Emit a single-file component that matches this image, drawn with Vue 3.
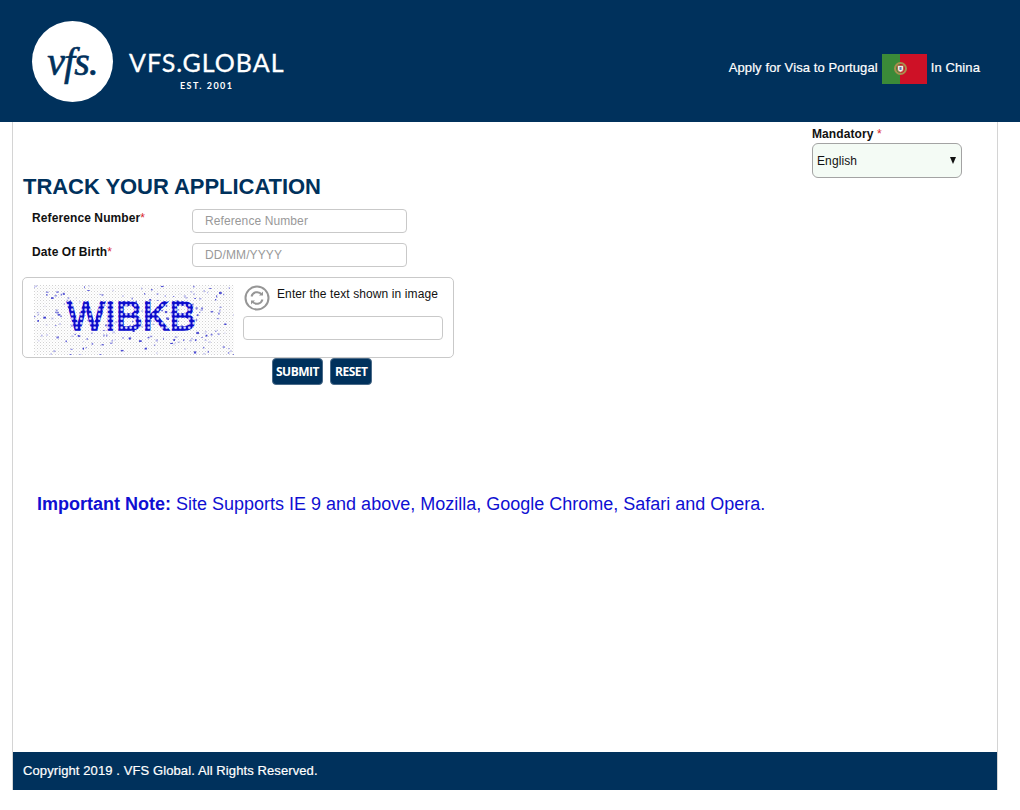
<script setup>
// captcha specks, seeded so every render is the same
let seed = 11
const rnd = () => {
  seed = (seed * 16807) % 2147483647
  return seed / 2147483647
}
const specks = Array.from({ length: 210 }, () => {
  const x = rnd() * 200
  const y = rnd() * 70
  return { x, y, w: 0.8 + rnd() * 2, h: 0.8 + rnd() * 1.4, o: 0.12 + rnd() * 0.8 }
})
</script>

<template>
  <div class="page">
    <header class="top">
      <div class="brand">
        <div class="seal"><span>vfs.</span></div>
        <div class="wordmark">
          <div class="name">VFS.GLOBAL</div>
          <div class="est">EST. 2001</div>
        </div>
      </div>
      <div class="apply">
        <span>Apply for Visa to Portugal</span>
        <svg class="flag" width="45" height="30" viewBox="0 0 45 30">
          <rect width="18" height="30" fill="#3b8a38" />
          <rect x="18" width="27" height="30" fill="#ce1126" />
          <circle cx="18.500" cy="14.500" r="5.500" fill="none" stroke="#a98f4e" stroke-width="2" />
          <path d="M15.500 11.500h6v3.500c0 2-1.500 2.800-3 3.200-1.500-.4-3-1.200-3-3.200z" fill="#f1eee4" stroke="#b5533f" stroke-width="0.800" />
          <rect x="17.500" y="13" width="2" height="3" fill="#5a78b5" />
        </svg>
        <span>In China</span>
      </div>
    </header>

    <main class="wrap">
      <div class="lang">
        <div class="lang-inner">
          <div class="mandatory">Mandatory <em>*</em></div>
          <div class="select">
            <span>English</span>
            <i class="arrow"></i>
          </div>
        </div>
      </div>

      <h1>TRACK YOUR APPLICATION</h1>

      <div class="row">
        <label>Reference Number<em>*</em></label>
        <input type="text" placeholder="Reference Number" />
      </div>
      <div class="row">
        <label>Date Of Birth<em>*</em></label>
        <input type="text" placeholder="DD/MM/YYYY" />
      </div>

      <div class="captcha">
        <svg class="captcha-img" width="200" height="70" viewBox="0 0 200 70">
          <defs>
            <pattern id="grain" width="3" height="3" patternUnits="userSpaceOnUse">
              <rect x="0" y="0" width="1" height="1" fill="#d2d2d2" />
              <rect x="1.500" y="1.500" width="1" height="1" fill="#e4e4e4" />
            </pattern>
            <pattern id="beads" width="4.500" height="4.500" patternUnits="userSpaceOnUse">
              <rect width="4.500" height="4.500" fill="#0a0acc" />
              <circle cx="2.250" cy="2.250" r="1.300" fill="#e6e6ff" />
            </pattern>
          </defs>
          <rect width="200" height="70" fill="url(#grain)" />
          <rect
            v-for="(s, i) in specks"
            :key="i"
            :x="s.x"
            :y="s.y"
            :width="s.w"
            :height="s.h"
            :opacity="s.o"
            fill="#1a1ac8"
          />
          <text x="33" y="45" class="captcha-text" fill="url(#beads)" stroke="url(#beads)" stroke-width="1.500">WIBKB</text>
        </svg>
        <div class="captcha-side">
          <div class="captcha-hint">
            <svg width="26" height="26" viewBox="0 0 26 26" fill="none" stroke="#969696">
              <circle cx="13" cy="13" r="11.500" stroke-width="2" />
              <path d="M7.500 11.500a5.800 5.800 0 0 1 10.200-2" stroke-width="2" />
              <path d="M19 6.500v4h-4z" fill="#969696" stroke="none" />
              <path d="M18.500 14.500a5.800 5.800 0 0 1-10.200 2" stroke-width="2" />
              <path d="M7 19.500v-4h4z" fill="#969696" stroke="none" />
            </svg>
            <span>Enter the text shown in image</span>
          </div>
          <input type="text" class="captcha-input" />
        </div>
      </div>

      <div class="actions">
        <button>SUBMIT</button>
        <button>RESET</button>
      </div>

      <p class="note"><b>Important Note:</b> Site Supports IE 9 and above, Mozilla, Google Chrome, Safari and Opera.</p>

      <footer class="foot">Copyright 2019 . VFS Global. All Rights Reserved.</footer>
    </main>
  </div>
</template>

<style>
html, body {
  margin: 0;
  background: #fff;
}
</style>

<style scoped>
.page {
  width: 1020px;
  height: 810px;
  font-family: "Liberation Sans", Arial, sans-serif;
  font-size: 12px;
  letter-spacing: 0.100px;
  color: #111;
  overflow: hidden;
}

.top {
  height: 122px;
  background: #00315c;
  display: flex;
  justify-content: space-between;
  align-items: flex-start;
  padding: 21px 40px 0 32px;
  box-sizing: border-box;
  color: #fff;
}

.brand {
  display: flex;
  align-items: center;
  gap: 16px;
}

.seal {
  width: 81px;
  height: 81px;
  border-radius: 50%;
  background: #fff;
  display: flex;
  align-items: center;
  justify-content: center;
  color: #00315c;
  font-family: "Liberation Serif", serif;
  font-style: italic;
  font-size: 40px;
  letter-spacing: -1px;
  -webkit-text-stroke: 0.600px #00315c;
}

.wordmark {
  text-align: center;
  margin-top: 15px;
}

.name {
  font-family: Lato, "Open Sans", sans-serif;
  font-size: 25px;
  line-height: 28px;
  letter-spacing: 1px;
  white-space: nowrap;
  -webkit-text-stroke: 0.300px #fff;
}

.est {
  font-family: Lato, "Open Sans", sans-serif;
  font-weight: 700;
  font-size: 9px;
  letter-spacing: 1.500px;
  margin-top: 4px;
}

.apply {
  display: flex;
  align-items: flex-start;
  gap: 4px;
  margin-top: 33px;
  font-size: 13px;
  line-height: 27px;
  -webkit-text-stroke: 0.200px #fff;
}

.flag {
  display: block;
}

.wrap {
  width: 986px;
  height: 668px;
  margin-left: 12px;
  box-sizing: border-box;
  border-left: 1px solid #d4d4d4;
  border-right: 1px solid #d4d4d4;
  display: flex;
  flex-direction: column;
}

.lang {
  display: flex;
  justify-content: flex-end;
  padding: 5px 35px 0 0;
}

.lang-inner {
  width: 150px;
}

.mandatory {
  font-weight: 700;
  line-height: 15px;
  height: 16px;
}

em {
  font-style: normal;
  font-weight: 400;
  color: #d9262c;
}

.select {
  height: 35px;
  box-sizing: border-box;
  border: 1px solid #a3a3a3;
  border-radius: 6px;
  background: #f4fbf5;
  display: flex;
  align-items: center;
  justify-content: space-between;
  padding: 0 4px;
}

.arrow {
  width: 0;
  height: 0;
  border-left: 3.500px solid transparent;
  border-right: 3.500px solid transparent;
  border-top: 7px solid #111;
  margin-right: 1px;
}

h1 {
  margin: -4px 0 0 10px;
  font-size: 22px;
  line-height: 26px;
  font-weight: 700;
  letter-spacing: -0.050px;
  color: #00315c;
}

.row {
  display: flex;
  align-items: flex-start;
  margin: 9px 0 2px 19px;
}

.row + .row {
  margin-top: 8px;
}

.row label {
  width: 160px;
  font-weight: 700;
  line-height: 18px;
}

input {
  box-sizing: border-box;
  width: 215px;
  height: 24px;
  border: 1px solid #c9c9c9;
  border-radius: 4px;
  padding: 0 12px;
  font: 12px "Liberation Sans", Arial, sans-serif;
  letter-spacing: 0.100px;
  outline: none;
  background: #fff;
}

input::placeholder {
  color: #999;
  opacity: 1;
}

.captcha {
  width: 432px;
  height: 81px;
  box-sizing: border-box;
  margin: 8px 0 0 9px;
  border: 1px solid #c9c9c9;
  border-radius: 5px;
  display: flex;
  align-items: flex-start;
  padding: 7px 10px 0 10px;
  gap: 9px;
}

.captcha-img {
  display: block;
  flex: none;
  margin-left: 1px;
}

.captcha-text {
  font-family: "Liberation Sans", Arial, sans-serif;
  font-size: 40px;
  letter-spacing: 0;
}

.captcha-side {
  flex: 1;
}

.captcha-hint {
  display: flex;
  align-items: flex-start;
  gap: 7px;
  padding-left: 1px;
  height: 31px;
  line-height: 16px;
  color: #111;
}

.captcha-hint svg {
  flex: none;
}

.captcha-hint span {
  margin-top: 1px;
}

.captcha-input {
  width: 200px;
  display: block;
}

.actions {
  display: flex;
  gap: 7px;
  margin: 0 0 0 259px;
}

button {
  height: 27px;
  padding: 0 3px;
  box-sizing: border-box;
  border: 1px solid #4a6a88;
  border-radius: 4px;
  background: #00315c;
  color: #fff;
  font-family: "Open Sans", sans-serif;
  font-weight: 700;
  font-size: 12px;
  letter-spacing: -0.500px;
}

button + button {
  padding: 0 4px;
}

.note {
  margin: 108px 0 0 24px;
  font-size: 18px;
  line-height: 22px;
  letter-spacing: 0;
  color: #0f0fd2;
}

.foot {
  margin-top: auto;
  height: 38px;
  line-height: 37px;
  padding-left: 10px;
  background: #00315c;
  color: #fff;
  font-size: 13px;
  -webkit-text-stroke: 0.200px #fff;
}
</style>
